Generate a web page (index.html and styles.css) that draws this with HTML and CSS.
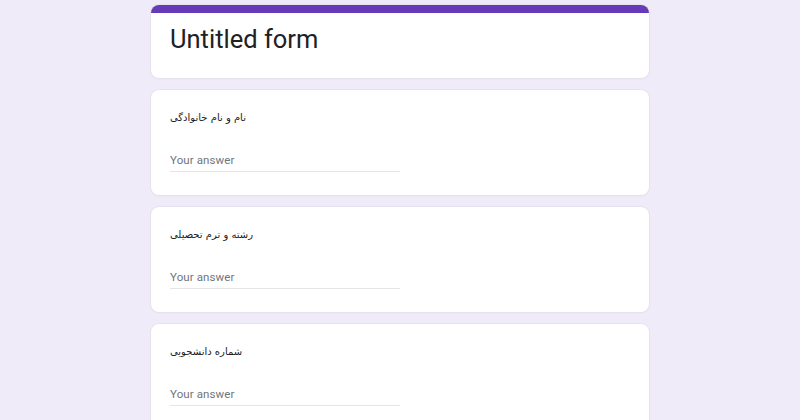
FILE: index.html
```html
<!DOCTYPE html>
<html lang="en">
<head>
<meta charset="utf-8">
<title>Untitled form</title>
<link rel="stylesheet" href="styles.css">
</head>
<body>
<main class="form">
  <section class="card title-card">
    <div class="title-bar"></div>
    <h1 class="title">Untitled form</h1>
  </section>
  <section class="card question">
    <div class="q-text" dir="rtl">نام و نام خانوادگی</div>
    <div class="answer">Your answer</div>
  </section>
  <section class="card question">
    <div class="q-text" dir="rtl">رشته و ترم تحصیلی</div>
    <div class="answer">Your answer</div>
  </section>
  <section class="card question">
    <div class="q-text" dir="rtl">شماره دانشجویی</div>
    <div class="answer">Your answer</div>
  </section>
</main>
</body>
</html>
```
FILE: styles.css
```css
html, body {
  margin: 0;
  padding: 0;
}
body {
  background: #f0ebf8;
  font-family: Roboto, "Liberation Sans", sans-serif;
}
.form {
  width: 498px;
  margin: 0 auto;
  padding-top: 5px;
  display: flex;
  flex-direction: column;
  gap: 12px;
}
.card {
  background: #fff;
  border-radius: 8px;
  box-shadow: 0 0 0 1px #e6e1ee, 0 1px 2px rgba(0,0,0,0.06);
  overflow: hidden;
}
.title-card {
  height: 73px;
}
.title-bar {
  height: 8px;
  background: #673ab7;
}
.title {
  margin: 0;
  padding: 8px 19px 0;
  font-family: Roboto, "Open Sans", sans-serif;
  font-weight: 400;
  font-size: 25.5px;
  line-height: 36px;
  color: #202124;
}
.question {
  height: 105px;
  padding: 0 19px;
  box-sizing: border-box;
  display: flex;
  flex-direction: column;
  align-items: flex-start;
}
.q-text {
  margin-top: 21px;
  font-family: "DejaVu Sans", sans-serif;
  font-size: 10px;
  line-height: 14px;
  color: #202124;
  text-align: left;
}
.answer {
  margin-top: 27px;
  width: 230px;
  box-sizing: border-box;
  font-family: Roboto, "Liberation Sans", sans-serif;
  font-size: 11.5px;
  letter-spacing: 0.1px;
  line-height: 16px;
  padding-bottom: 3px;
  color: #70757a;
  border-bottom: 1px solid #e5e5e5;
}
```
